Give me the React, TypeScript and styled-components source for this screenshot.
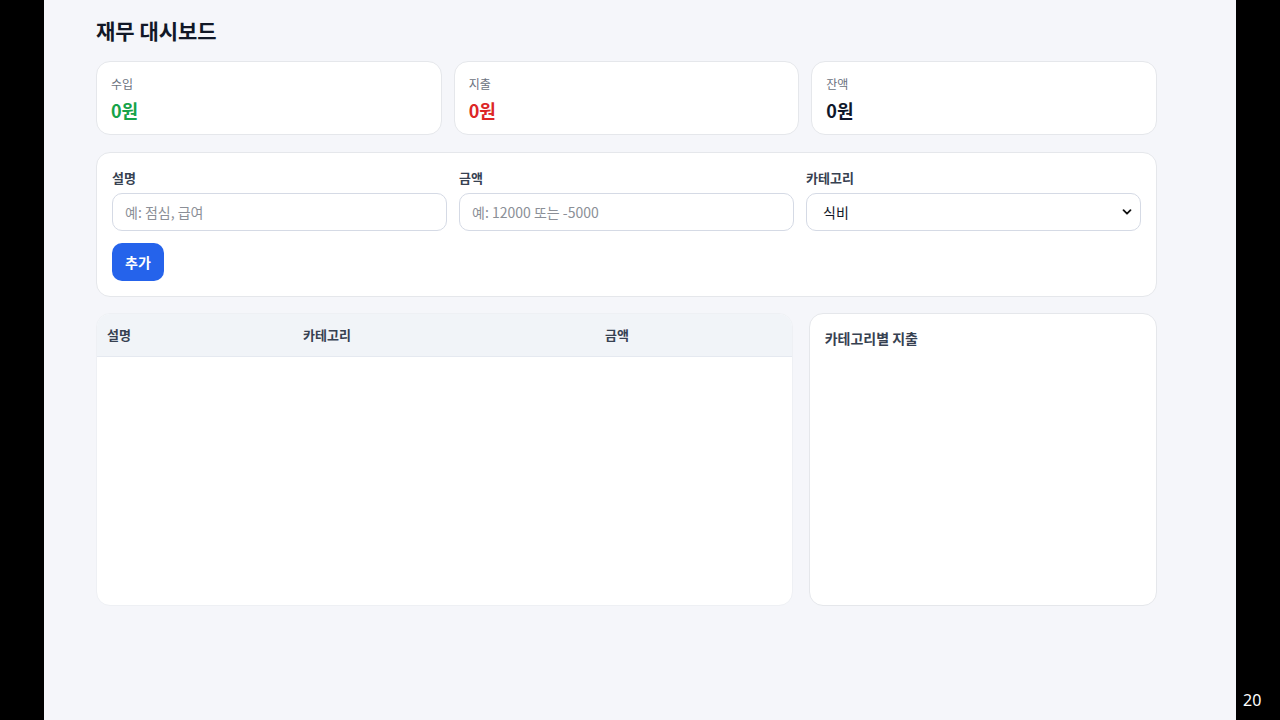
import React, { useState } from 'react';
import styled, { createGlobalStyle } from 'styled-components';

const GlobalStyle = createGlobalStyle`
  html, body {
    margin: 0;
    padding: 0;
    background: #000;
    font-family: "Noto Sans CJK KR", "Noto Sans", sans-serif;
  }
  * {
    box-sizing: border-box;
  }
`;

interface Summary {
  label: string;
  value: string;
  tone: 'income' | 'expense' | 'balance';
}

const summaries: Summary[] = [
  { label: '수입', value: '0원', tone: 'income' },
  { label: '지출', value: '0원', tone: 'expense' },
  { label: '잔액', value: '0원', tone: 'balance' },
];

const toneColor = {
  income: '#16a34a',
  expense: '#dc2626',
  balance: '#0f172a',
};

const App: React.FC = () => {
  const [desc, setDesc] = useState('');
  const [amount, setAmount] = useState('');
  const [category, setCategory] = useState('식비');

  return (
    <>
      <GlobalStyle />
      <Frame>
        <Side />
        <Page>
          <Title>재무 대시보드</Title>

          {/* summary cards */}
          <SummaryRow>
            {summaries.map(item => (
              <SummaryCard key={item.label}>
                <SummaryLabel>{item.label}</SummaryLabel>
                <SummaryValue $tone={item.tone}>{item.value}</SummaryValue>
              </SummaryCard>
            ))}
          </SummaryRow>

          {/* input form */}
          <FormCard>
            <FieldGrid>
              <Field>
                <FieldLabel>설명</FieldLabel>
                <TextInput
                  placeholder="예: 점심, 급여"
                  value={desc}
                  onChange={e => setDesc(e.target.value)}
                />
              </Field>
              <Field>
                <FieldLabel>금액</FieldLabel>
                <TextInput
                  placeholder="예: 12000 또는 -5000"
                  value={amount}
                  onChange={e => setAmount(e.target.value)}
                />
              </Field>
              <Field>
                <FieldLabel>카테고리</FieldLabel>
                <SelectWrap>
                  <Select value={category} onChange={e => setCategory(e.target.value)}>
                    <option>식비</option>
                    <option>교통</option>
                    <option>주거</option>
                    <option>급여</option>
                    <option>기타</option>
                  </Select>
                  <Chevron viewBox="0 0 10 10">
                    <path d="M1.5 3.2 L5 6.7 L8.5 3.2" />
                  </Chevron>
                </SelectWrap>
              </Field>
            </FieldGrid>
            <AddButton>추가</AddButton>
          </FormCard>

          {/* list + chart */}
          <BottomGrid>
            <TableCard>
              <Table>
                <thead>
                  <tr>
                    <Th $width="196px">설명</Th>
                    <Th $width="302px">카테고리</Th>
                    <Th>금액</Th>
                  </tr>
                </thead>
                <tbody />
              </Table>
            </TableCard>
            <ChartCard>
              <ChartTitle>카테고리별 지출</ChartTitle>
            </ChartCard>
          </BottomGrid>
        </Page>
        <Side>
          <PageNum>20</PageNum>
        </Side>
      </Frame>
    </>
  );
};

export default App;

/*** style ***/
const Frame = styled.div`
  display: flex;
  width: 1280px;
  height: 720px;
  overflow: hidden;
  background: #000;
`;

const Side = styled.div`
  width: 44px;
  flex-shrink: 0;
  display: flex;
  align-items: flex-end;
  justify-content: flex-start;
  padding: 0 0 10px 7px;
`;

const PageNum = styled.span`
  color: #fff;
  font-family: "Noto Sans", "DejaVu Sans", sans-serif;
  font-size: 16px;
  line-height: 20px;
`;

const Page = styled.div`
  flex: 1;
  background: #f5f6fa;
  padding: 16px 79px 0 52px;
`;

const Title = styled.h1`
  margin: 0 0 17px;
  font-size: 21px;
  line-height: 28px;
  font-weight: 700;
  color: #111827;
`;

const SummaryRow = styled.div`
  display: grid;
  grid-template-columns: repeat(3, 1fr);
  gap: 12px;
  margin-bottom: 17px;
`;

const SummaryCard = styled.div`
  background: #fff;
  border: 1px solid #e5e7eb;
  border-radius: 14px;
  padding: 14px 14px 12px;
  display: flex;
  flex-direction: column;
  gap: 6px;
`;

const SummaryLabel = styled.div`
  font-size: 12px;
  line-height: 16px;
  color: #6b7280;
`;

const SummaryValue = styled.div<{ $tone: Summary['tone'] }>`
  font-size: 18px;
  line-height: 24px;
  font-weight: 700;
  color: ${p => toneColor[p.$tone]};
`;

const FormCard = styled.div`
  background: #fff;
  border: 1px solid #e5e7eb;
  border-radius: 14px;
  padding: 16px 15px 15px;
  margin-bottom: 16px;
`;

const FieldGrid = styled.div`
  display: grid;
  grid-template-columns: repeat(3, 1fr);
  gap: 12px;
  margin-bottom: 12px;
`;

const Field = styled.label`
  display: flex;
  flex-direction: column;
  gap: 6px;
`;

const FieldLabel = styled.span`
  font-size: 13px;
  line-height: 18px;
  font-weight: 700;
  color: #374151;
`;

const TextInput = styled.input`
  height: 38px;
  border: 1px solid #d5dae5;
  border-radius: 10px;
  padding: 0 12px;
  font-family: "Noto Sans CJK KR", "Noto Sans", sans-serif;
  font-size: 14px;
  color: #111827;
  background: #fff;
  outline: none;

  &::placeholder {
    color: #8b8f97;
  }
`;

const SelectWrap = styled.div`
  position: relative;
`;

const Select = styled.select`
  width: 100%;
  height: 38px;
  border: 1px solid #d5dae5;
  border-radius: 10px;
  padding: 0 16px;
  font-family: "Noto Sans CJK KR", "Noto Sans", sans-serif;
  font-size: 14px;
  color: #111827;
  background: #fff;
  appearance: none;
  outline: none;
`;

const Chevron = styled.svg`
  position: absolute;
  right: 9px;
  top: 14px;
  width: 10px;
  height: 10px;
  pointer-events: none;

  path {
    fill: none;
    stroke: #111;
    stroke-width: 1.8;
    stroke-linecap: round;
    stroke-linejoin: round;
  }
`;

const AddButton = styled.button`
  height: 38px;
  width: 52px;
  border: none;
  border-radius: 10px;
  background: #2563eb;
  color: #fff;
  font-family: "Noto Sans CJK KR", "Noto Sans", sans-serif;
  font-size: 14px;
  font-weight: 700;
  cursor: pointer;
`;

const BottomGrid = styled.div`
  display: grid;
  grid-template-columns: 2fr 1fr;
  gap: 16px;
  height: 293px;
`;

const TableCard = styled.div`
  background: #fff;
  border: 1px solid #eef0f4;
  border-radius: 14px;
  overflow: hidden;
`;

const Table = styled.table`
  width: 100%;
  border-collapse: collapse;
`;

const Th = styled.th<{ $width?: string }>`
  width: ${p => p.$width || 'auto'};
  height: 42px;
  padding: 0 10px;
  text-align: left;
  font-size: 13px;
  font-weight: 700;
  color: #374151;
  background: #f1f4f8;
  border-bottom: 1px solid #e5e9f0;
`;

const ChartCard = styled.div`
  background: #fff;
  border: 1px solid #e5e7eb;
  border-radius: 14px;
  padding: 14px 15px;
`;

const ChartTitle = styled.h3`
  margin: 0;
  font-size: 14px;
  line-height: 20px;
  font-weight: 700;
  color: #374151;
`;
